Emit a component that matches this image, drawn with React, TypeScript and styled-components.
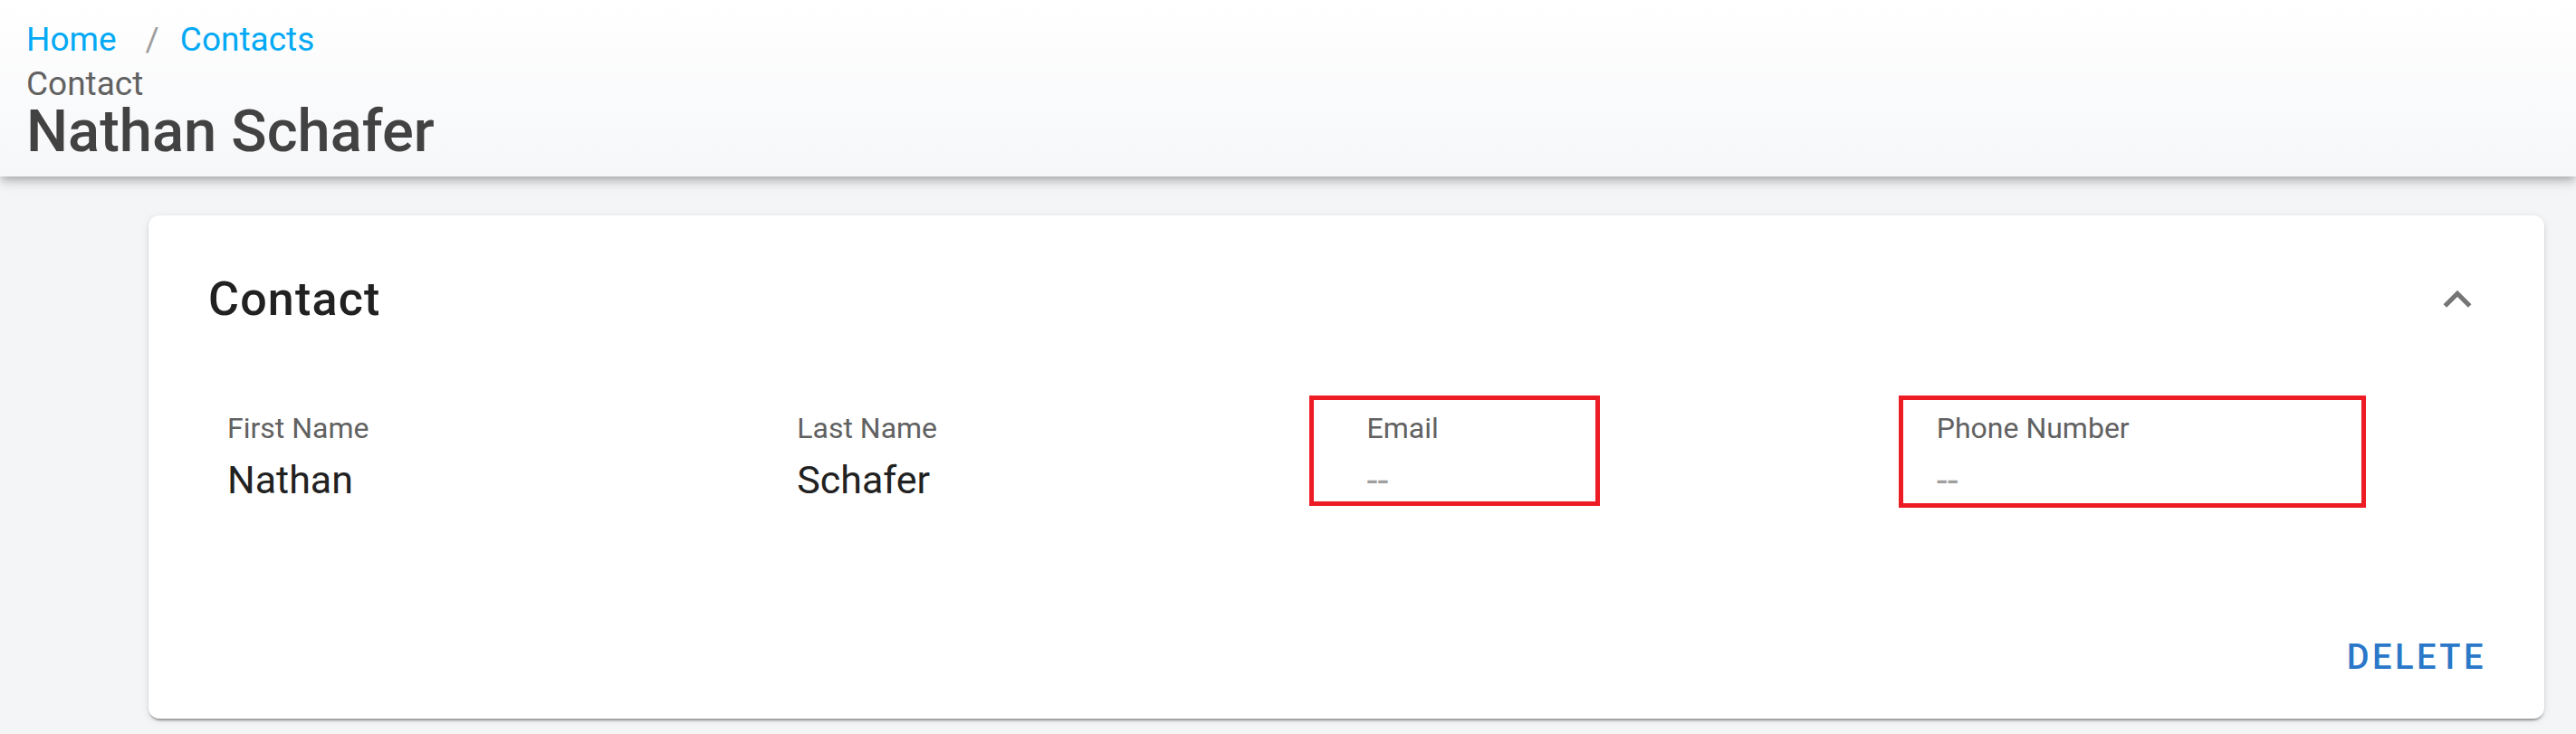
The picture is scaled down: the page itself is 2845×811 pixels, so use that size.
import React from "react";
import styled, { createGlobalStyle } from "styled-components";

const GlobalStyle = createGlobalStyle`
  html, body {
    margin: 0;
    padding: 0;
    background: #f4f5f7;
    font-family: Roboto, "Liberation Sans", Arial, sans-serif;
  }
  * { box-sizing: border-box; }
`;

const Page = styled.div`
  min-height: 811px;
  background: #f4f5f7;
`;

const Header = styled.header`
  position: relative;
  z-index: 1;
  padding: 22px 29px 20px;
  background: linear-gradient(180deg, #ffffff 0%, #f6f7f9 100%);
  box-shadow: 0 4px 8px -2px rgba(0, 0, 0, 0.2), 0 8px 10px rgba(0, 0, 0, 0.1),
    0 2px 20px rgba(0, 0, 0, 0.08);
`;

const Breadcrumbs = styled.nav`
  display: flex;
  align-items: center;
  font-size: 37px;
  line-height: 44px;
`;

const Crumb = styled.a`
  color: #03a9f4;
  text-decoration: none;
`;

const Separator = styled.span`
  color: #9e9e9e;
  margin: 0 23px 0 32px;
`;

const Subtitle = styled.div`
  margin-top: 9px;
  font-size: 37px;
  line-height: 36px;
  color: #616161;
`;

const Title = styled.h1`
  margin: 4px 0 0;
  font-size: 65px;
  line-height: 60px;
  font-weight: 500;
  color: #424242;
`;

const Main = styled.main`
  padding: 43px 35px 18px 164px;
`;

const Card = styled.section`
  background: #ffffff;
  border-radius: 12px;
  padding: 62px 68px 46px 66px;
  box-shadow: 0 4px 2px -2px rgba(0, 0, 0, 0.25), 0 2px 3px rgba(0, 0, 0, 0.12),
    0 2px 8px rgba(0, 0, 0, 0.1);
`;

const CardHeader = styled.div`
  display: flex;
  align-items: center;
  justify-content: space-between;
`;

const CardTitle = styled.h2`
  margin: 0;
  font-size: 52px;
  line-height: 60px;
  font-weight: 500;
  letter-spacing: 1.2px;
  color: #212121;
`;

const IconButton = styled.button`
  display: flex;
  width: 62px;
  height: 62px;
  margin-right: -3px;
  padding: 0;
  border: 0;
  background: transparent;
  color: #757575;
  cursor: pointer;
`;

const FieldGrid = styled.div`
  display: grid;
  grid-template-columns: repeat(4, 1fr);
  margin: 91px -7px 0 2px;
`;

const Field = styled.div`
  position: relative;
  padding-left: 19px;
`;

const Label = styled.div`
  font-size: 32px;
  line-height: 40px;
  color: #616161;
`;

const Value = styled.div<{ $empty?: boolean }>`
  margin-top: 9px;
  font-size: 43px;
  line-height: 56px;
  color: ${(p) => (p.$empty ? "#9e9e9e" : "#212121")};
`;

const Highlight = styled.div<{ $left: number; $width: number; $height: number }>`
  position: absolute;
  top: -16px;
  left: ${(p) => p.$left}px;
  width: ${(p) => p.$width}px;
  height: ${(p) => p.$height}px;
  border: 5px solid #ed1c24;
  pointer-events: none;
`;

const Actions = styled.div`
  display: flex;
  justify-content: flex-end;
  margin-top: 146px;
`;

const TextButton = styled.button`
  padding: 0;
  margin-right: -4px;
  border: 0;
  background: transparent;
  font-family: Roboto, "Liberation Sans", Arial, sans-serif;
  font-size: 38px;
  line-height: 44px;
  font-weight: 500;
  letter-spacing: 3.5px;
  text-transform: uppercase;
  color: #2b78c9;
  cursor: pointer;
`;

type FieldData = {
  label: string;
  value?: string;
  highlight?: { left: number; width: number; height: number };
};

const fields: FieldData[] = [
  { label: "First Name", value: "Nathan" },
  { label: "Last Name", value: "Schafer" },
  { label: "Email", highlight: { left: -45, width: 321, height: 122 } },
  { label: "Phone Number", highlight: { left: -23, width: 516, height: 124 } },
];

const ChevronUp = () => (
  <svg width="62" height="62" viewBox="0 0 24 24" fill="currentColor">
    <path d="M12 8l-6 6 1.41 1.41L12 10.83l4.59 4.58L18 14z" />
  </svg>
);

export default function App() {
  return (
    <Page>
      <GlobalStyle />
      <Header>
        <Breadcrumbs>
          <Crumb href="#">Home</Crumb>
          <Separator>/</Separator>
          <Crumb href="#">Contacts</Crumb>
        </Breadcrumbs>
        <Subtitle>Contact</Subtitle>
        <Title>Nathan Schafer</Title>
      </Header>
      <Main>
        <Card>
          <CardHeader>
            <CardTitle>Contact</CardTitle>
            <IconButton aria-label="collapse">
              <ChevronUp />
            </IconButton>
          </CardHeader>
          <FieldGrid>
            {fields.map((f) => (
              <Field key={f.label}>
                {f.highlight && (
                  <Highlight
                    $left={f.highlight.left}
                    $width={f.highlight.width}
                    $height={f.highlight.height}
                  />
                )}
                <Label>{f.label}</Label>
                <Value $empty={!f.value}>{f.value ?? "--"}</Value>
              </Field>
            ))}
          </FieldGrid>
          <Actions>
            <TextButton>Delete</TextButton>
          </Actions>
        </Card>
      </Main>
    </Page>
  );
}
